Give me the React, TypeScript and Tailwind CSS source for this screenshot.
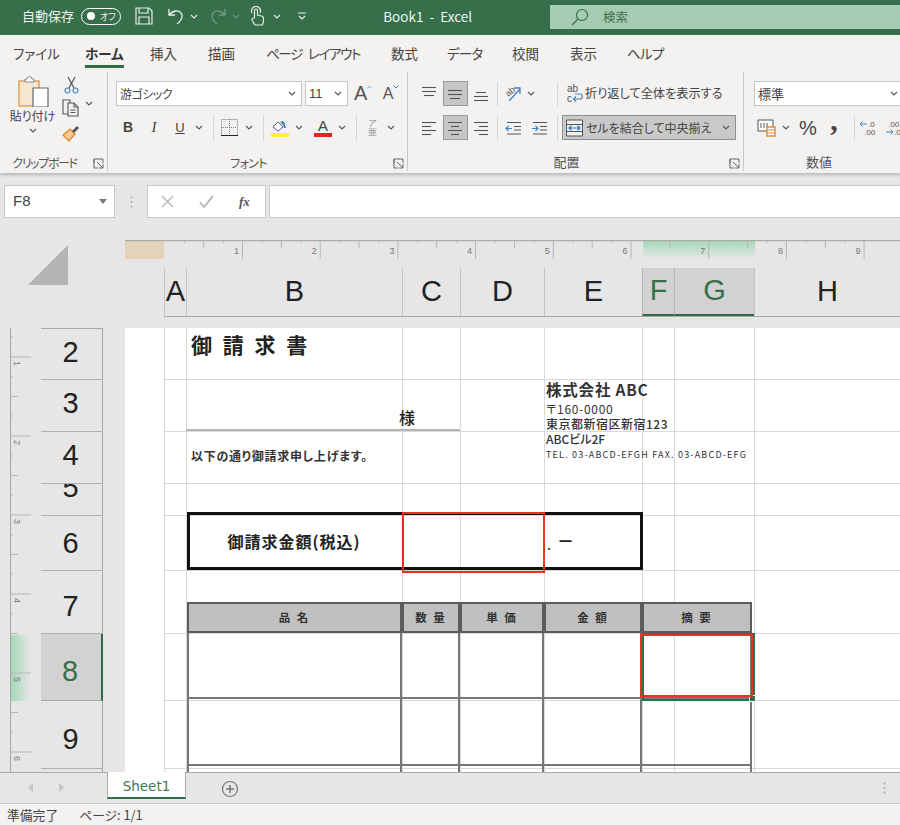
import React from "react";

const Chev = ({ c = "#555", s = 8 }: { c?: string; s?: number }) => (
  <svg className="shrink-0" width={s} height={s * 0.625} viewBox="0 0 8 5" fill="none" stroke={c} strokeWidth="1.1"><path d="M1 1l3 3 3-3" /></svg>
);
const Slot = ({ c, children }: { c: string; children?: React.ReactNode }) => (
  <div className={`flex h-full shrink-0 items-center justify-center ${c}`}>{children}</div>
);
const Sep = () => <div className="h-[24px] w-px shrink-0 bg-[#d4d4d4]" />;

const Lines = ({ rows }: { rows: [number, number, number][] }) => (
  <svg width="18" height="18" viewBox="0 0 18 18" stroke="#555" strokeWidth="1.1">
    {rows.map(([x1, x2, y], i) => <line key={i} x1={x1} x2={x2} y1={y + 0.5} y2={y + 0.5} />)}
  </svg>
);

const Launcher = () => (
  <svg width="11" height="11" viewBox="0 0 11 11" fill="none" stroke="#666" strokeWidth="1">
    <path d="M1 5V1h9v4M1 1v9h4" /><path d="M4 4l6 6M6 10h4V6" />
  </svg>
);

function Group({ w, lw, label, launcher = true, children }: { w: string; lw: string; label: string; launcher?: boolean; children: React.ReactNode }) {
  return (
    <div className={`my-[2px] flex shrink-0 flex-col ${w}`}>
      <div className="min-h-0 flex-1">{children}</div>
      <div className="flex h-[18px] items-center pt-[2px]">
        <div className={`text-center leading-none text-[#555] ${lw}`}>{label}</div>
        {launcher && <div className="flex w-[18px] justify-center"><Launcher /></div>}
      </div>
    </div>
  );
}

const TABS: [string, string][] = [
  ["ファイル", "w-[72px]"], ["ホーム", "w-[65px]"], ["挿入", "w-[58px]"], ["描画", "w-[58px]"], ["ページ レイアウト", "w-[125px] tracking-[-1.300px] [word-spacing:4px]"],
  ["数式", "w-[56px]"], ["データ", "w-[65px] tracking-[-0.8px]"], ["校閲", "w-[58px]"], ["表示", "w-[57px]"], ["ヘルプ", "w-[60px] tracking-[-0.8px]"],
];

function TitleBar() {
  const ink = "#e6efe9";
  return (
    <div className="flex h-[35px] shrink-0 items-center bg-[#366f4a] pb-[3px] pl-[22px] text-[#eef4f0]">
      <span className="w-[51px] text-[13px] whitespace-nowrap">自動保存</span>
      <div className="ml-[8px] flex h-[17px] w-[41px] items-center rounded-full border border-white pl-[5px]">
        <span className="h-[8px] w-[8px] rounded-full bg-white" />
        <span className="ml-[5px] text-[9px] leading-none">オフ</span>
      </div>
      <div className="ml-[14px] flex">
        <svg width="18" height="18" viewBox="0 0 18 18" fill="none" stroke={ink} strokeWidth="1.2"><path d="M1 1h13l3 3v13H1z" /><path d="M4 1v5h9V1M4 17v-7h10v7" /></svg>
      </div>
      <div className="ml-[15px] flex">
        <svg width="16" height="18" viewBox="0 0 16 18" fill="none" stroke={ink} strokeWidth="1.3"><path d="M1 2v6h6" /><path d="M1 8c4-5 10-5 12-2 3 4-1 9-4 11" /></svg>
      </div>
      <Slot c="w-[20px]"><Chev c={ink} /></Slot>
      <div className="ml-[6px] flex">
        <svg width="16" height="18" viewBox="0 0 16 18" fill="none" stroke="#6f9a7f" strokeWidth="1.3"><path d="M15 2v6H9" /><path d="M15 8c-4-5-10-5-12-2-3 4 1 9 4 11" /></svg>
      </div>
      <Slot c="w-[20px]"><Chev c="#6f9a7f" /></Slot>
      <div className="ml-[4px] flex">
        <svg width="14" height="20" viewBox="0 0 14 20" fill="none" stroke={ink} strokeWidth="1.2"><path d="M2 7a4.5 4.5 0 1 1 8 0" /><path d="M4.5 12V4.5a1.5 1.5 0 0 1 3 0V9l4 1c1.500.4 2 1 2 2v3l-1 4H5l-3-5c-.5-1 .5-2 2.500-2" /></svg>
      </div>
      <Slot c="w-[26px]"><Chev c={ink} /></Slot>
      <Slot c="w-[24px]">
        <svg width="10" height="9" viewBox="0 0 10 9" fill="none" stroke={ink} strokeWidth="1.1"><path d="M1 1h8M2 4l3 3 3-3" /></svg>
      </Slot>
      <span className="ml-[69px] w-[100px] text-[13.500px] whitespace-nowrap">Book1 &nbsp;-&nbsp; Excel</span>
      <div className="mt-[5px] ml-[69px] flex h-[24px] w-[350px] shrink-0 items-center self-start bg-[#a6cbb3] pl-[21px] text-[#3f6f52]">
        <svg width="18" height="18" viewBox="0 0 18 18" fill="none" stroke="#33704a" strokeWidth="1.2"><circle cx="11" cy="7" r="5.500" /><path d="M7 11l-6 6" /></svg>
        <span className="ml-[14px] text-[12.500px]">検索</span>
      </div>
    </div>
  );
}

function TabRow() {
  return (
    <div className="flex h-[35px] shrink-0 items-center bg-[#f3f2f1] pl-[13px] text-[13.500px] text-[#444]">
      {TABS.map(([t, w]) => (
        <div key={t} className={`shrink-0 whitespace-nowrap ${w}`}>
          <span className={`inline-block border-b-[3px] pt-[6px] pb-[1px] ${t === "ホーム" ? "border-[#2f6b45] font-bold text-[#333]" : "border-transparent"}`}>{t}</span>
        </div>
      ))}
    </div>
  );
}

function Ribbon() {
  return (
    <div className="relative z-10 flex h-[103px] shrink-0 overflow-hidden bg-[#f3f2f1] shadow-[0_2px_3px_rgba(0,0,0,0.2)]">
      {/* clipboard */}
      <Group w="w-[108px] border-r border-[#c8c8c8]" lw="w-[89px] text-[12px] tracking-[-1.400px] whitespace-nowrap" label="クリップボード">
        <div className="flex h-full">
          <div className="ml-[9px] flex w-[47px] shrink-0 flex-col items-center pt-[3px]">
            <svg width="32" height="32" viewBox="0 0 32 32" fill="none">
              <path d="M2 6h20v25H2z" fill="#f7e6cf" stroke="#dfa45a" strokeWidth="1.500" />
              <path d="M8 6V4h2a2.500 2.500 0 0 1 5 0h2v3H8z" fill="#fff" stroke="#888" strokeWidth="1" />
              <path d="M16 13h15v19H16z" fill="#fff" stroke="#666" strokeWidth="1.200" />
            </svg>
            <span className="mt-[1px] text-[12px] leading-[15px] whitespace-nowrap text-[#444]">貼り付け</span>
            <div className="mt-[5px]"><Chev /></div>
          </div>
          <div className="ml-[5px] flex w-[20px] flex-col items-center pt-[4px]">
            <svg width="15" height="18" viewBox="0 0 15 18" fill="none" stroke="#4a4a4a" strokeWidth="1.100"><path d="M4 1l6 11M11 1L5 12" /><circle cx="3.500" cy="14.500" r="2.500" stroke="#3d85c6" /><circle cx="11.500" cy="14.500" r="2.500" stroke="#3d85c6" /></svg>
            <svg className="mt-[5px]" width="18" height="18" viewBox="0 0 18 18" fill="none" stroke="#555" strokeWidth="1.100"><path d="M1 1h7v14H1z" /><path d="M6 4h6l4 4v9H6z" fill="#f3f2f1" /><path d="M12 4v4h4M8.500 11h5M8.500 13.500h5" /></svg>
            <svg className="mt-[7px]" width="18" height="18" viewBox="0 0 18 18"><path d="M1 11l7-6 5 5-6 7c-2-2-4-3-6-6z" fill="#f5c78e" stroke="#d98a2b" strokeWidth="1.200" /><path d="M10 7l5-5 2 2-5 5z" fill="#555" /></svg>
          </div>
          <div className="ml-[4px] pt-[29px]"><Chev /></div>
        </div>
      </Group>
      {/* font */}
      <Group w="w-[300px] border-r border-[#c8c8c8]" lw="w-[281px] text-[12px] tracking-[-0.700px]" label="フォント">
        <div className="flex h-[25px] mt-[9px] pl-[8px]">
          <div className="flex h-full w-[186px] items-center justify-between border border-[#c6c6c6] bg-white pr-[5px] pl-[3px] text-[12px] tracking-[-0.500px] text-[#444]"><span>游ゴシック</span><Chev /></div>
          <div className="ml-[3px] flex h-full w-[43px] items-center justify-between border border-[#c6c6c6] bg-white pr-[5px] pl-[3px] text-[13px] text-[#444]"><span className="font-['Liberation_Sans']">11</span><Chev /></div>
          <div className="ml-[6px] flex w-[18px] items-start justify-center text-[20px] leading-[24px] text-[#555]"><span className="font-['Liberation_Sans']">A</span><svg className="mt-[4px]" width="6" height="4" viewBox="0 0 6 4" fill="none" stroke="#3d85c6"><path d="M0.500 3.500L3 1l2.500 2.500" /></svg></div>
          <div className="ml-[10px] flex w-[18px] items-start justify-center text-[16px] leading-[25px] text-[#555]"><span className="font-['Liberation_Sans']">A</span><svg className="mt-[4px]" width="6" height="4" viewBox="0 0 6 4" fill="none" stroke="#3d85c6"><path d="M0.500 0.500L3 3l2.500-2.500" /></svg></div>
        </div>
        <div className="mt-[9px] flex h-[25px] items-center pl-[8px] font-['Liberation_Sans'] text-[#444]">
          <Slot c="w-[24px]"><span className="text-[14px] font-bold">B</span></Slot>
          <Slot c="w-[28px]"><span className="font-['Liberation_Serif'] text-[15px] italic">I</span></Slot>
          <Slot c="w-[24px]"><span className="text-[13px] underline">U</span></Slot>
          <Slot c="w-[14px]"><Chev /></Slot>
          <Slot c="w-[14px]"><Sep /></Slot>
          <Slot c="w-[18px]">
            <svg width="17" height="17" viewBox="0 0 17 17" fill="none" stroke="#777" strokeWidth="1" strokeDasharray="1 1"><path d="M.5.500h16v16H.5zM8.500 0v16M0 8.500h16" /><path d="M0 16.500h17" stroke="#222" strokeDasharray="none" /></svg>
          </Slot>
          <Slot c="w-[22px]"><Chev /></Slot>
          <Slot c="w-[6px]"><Sep /></Slot>
          <Slot c="w-[28px]">
            <svg width="18" height="18" viewBox="0 0 18 18"><path d="M2 8l5-5 5 5-5 4z" fill="#fff" stroke="#666" /><path d="M9 3c3-2 5 0 5 3l1 3-2 0-1-3z" fill="#3d85c6" /><rect x="0" y="14" width="18" height="4" fill="#ffef38" /></svg>
          </Slot>
          <Slot c="w-[10px]"><Chev /></Slot>
          <Slot c="w-[38px]">
            <div className="flex w-[18px] flex-col items-center"><span className="text-[15px] leading-[14px]">A</span><span className="h-[4px] w-[18px] bg-[#e8261c]" /></div>
          </Slot>
          <Slot c="-ml-[7px] w-[14px]"><Chev /></Slot>
          <Slot c="w-[14px]"><Sep /></Slot>
          <Slot c="w-[18px]">
            <div className="flex flex-col items-center text-[9px] leading-[9px] text-[#888]"><span>ア</span><span>亜</span></div>
          </Slot>
          <Slot c="w-[20px]"><Chev /></Slot>
        </div>
      </Group>
      {/* alignment */}
      <Group w="w-[336px] border-r border-[#c8c8c8]" lw="-mt-[3px] w-[317px] text-[13px]" label="配置">
        <div className="mt-[9px] flex h-[25px] items-center pl-[8px]">
          <Slot c="w-[26px]"><Lines rows={[[2, 16, 2], [2, 16, 6], [4, 14, 10]]} /></Slot>
          <Slot c="w-[26px]"><div className="flex h-[25px] w-[25px] items-center justify-center border border-[#9a9a9a] bg-[#c6c6c6]"><Lines rows={[[2, 16, 5], [2, 16, 9], [4, 14, 13]]} /></div></Slot>
          <Slot c="w-[26px]"><Lines rows={[[4, 14, 7], [2, 16, 11], [2, 16, 15]]} /></Slot>
          <Slot c="w-[6px]"><Sep /></Slot>
          <Slot c="w-[26px]">
            <svg width="20" height="20" viewBox="0 0 20 20" fill="none"><text x="3" y="11" fontSize="9" fill="#555" fontFamily="Liberation Sans" transform="rotate(-40 7 9)">ab</text><path d="M6 17L17 5M11 4h6v6" stroke="#3d85c6" strokeWidth="1.300" /></svg>
          </Slot>
          <Slot c="w-[10px]"><Chev /></Slot>
          <Slot c="w-[21px]" />
          <Slot c="w-px"><Sep /></Slot>
          <div className="ml-[9px] flex items-center text-[12.200px] whitespace-nowrap text-[#444]">
            <svg width="17" height="20" viewBox="0 0 17 20" fill="none"><text x="0" y="8" fontSize="10" fill="#555" fontFamily="Liberation Sans">ab</text><text x="0" y="18" fontSize="10" fill="#555" fontFamily="Liberation Sans">c</text><path d="M7 15h6c3 0 3-5 0-5H8M9 12.500L6.500 15 9 17.500" stroke="#3d85c6" strokeWidth="1.200" /></svg>
            <span className="ml-[1px]">折り返して全体を表示する</span>
          </div>
        </div>
        <div className="mt-[9px] flex h-[25px] items-center pl-[8px]">
          <Slot c="w-[26px]"><Lines rows={[[2, 16, 3], [2, 11, 7], [2, 16, 11], [2, 11, 15]]} /></Slot>
          <Slot c="w-[26px]"><div className="flex h-[25px] w-[25px] items-center justify-center border border-[#9a9a9a] bg-[#c6c6c6]"><Lines rows={[[2, 16, 3], [5, 13, 7], [2, 16, 11], [5, 13, 15]]} /></div></Slot>
          <Slot c="w-[26px]"><Lines rows={[[2, 16, 3], [7, 16, 7], [2, 16, 11], [7, 16, 15]]} /></Slot>
          <Slot c="w-[6px]"><Sep /></Slot>
          <Slot c="w-[27px]">
            <svg width="18" height="18" viewBox="0 0 18 18" fill="none"><path d="M2 3.500h14M9 7.500h7M9 11h7M2 15h14" stroke="#555" /><path d="M7 9.500H1M3.500 7L1 9.500 3.500 12" stroke="#3d85c6" strokeWidth="1.200" /></svg>
          </Slot>
          <Slot c="w-[26px]">
            <svg width="18" height="18" viewBox="0 0 18 18" fill="none"><path d="M2 3.500h14M9 7.500h7M9 11h7M2 15h14" stroke="#555" /><path d="M1 9.500h6M4.500 7L7 9.500 4.500 12" stroke="#3d85c6" strokeWidth="1.200" /></svg>
          </Slot>
          <Slot c="w-[4px]" />
          <Slot c="w-px"><Sep /></Slot>
          <div className="ml-[4px] flex h-[25px] w-[174px] shrink-0 items-center border border-[#8f8f8f] bg-[#c9c9c9] pl-[3px] text-[12px] whitespace-nowrap text-[#444]">
            <svg width="17" height="18" viewBox="0 0 17 18" fill="none"><path d="M.5 1h16v16H.5z" stroke="#555" fill="#f3f2f1" /><path d="M.5 5.500h16M.5 12.500h16" stroke="#555" /><path d="M3 9h11M5.500 6.800L3 9l2.500 2.200M11.500 6.800L14 9l-2.500 2.200" stroke="#2b7cd3" strokeWidth="1.200" /></svg>
            <span className="ml-[3px] w-[136px]">セルを結合して中央揃え</span>
            <Chev />
          </div>
        </div>
      </Group>
      {/* number */}
      <Group w="w-[156px]" lw="-mt-[3px] w-[150px] text-[13px]" label="数値" launcher={false}>
        <div className="mt-[9px] ml-[10px] flex h-[25px] w-[155px] shrink-0 items-center justify-between border border-[#c6c6c6] bg-white pr-[10px] pl-[3px] text-[13px] text-[#444]"><span>標準</span><Chev /></div>
        <div className="mt-[9px] flex h-[25px] items-center text-[#444]">
          <Slot c="ml-[13px] w-[19px]">
            <svg width="19" height="19" viewBox="0 0 19 19" fill="none"><path d="M1 2h15v11H1z" stroke="#555" fill="#fff" /><path d="M4 5v5M7 5v5M10 5v5" stroke="#555" /><path d="M10 9h8v9h-8z" fill="#fff" stroke="#e08a2a" strokeWidth="1.300" /><path d="M10 12h8M10 15h8" stroke="#e08a2a" /></svg>
          </Slot>
          <Slot c="w-[20px]"><Chev /></Slot>
          <Slot c="w-[24px]"><span className="font-['Liberation_Sans'] text-[20px]">%</span></Slot>
          <Slot c="w-[28px]"><span className="-mt-[16px] font-['Liberation_Serif'] text-[30px] font-bold leading-none">,</span></Slot>
          <Slot c="w-[6px]" />
          <Slot c="w-px"><Sep /></Slot>
          <Slot c="w-[26px]">
            <svg width="18" height="18" viewBox="0 0 18 18" fill="none"><text x="9" y="8" fontSize="8" fill="#555" fontFamily="Liberation Sans">.0</text><text x="5" y="16" fontSize="8" fill="#555" fontFamily="Liberation Sans">.00</text><path d="M8 5H1M3.500 2.500L1 5l2.500 2.500" stroke="#3d85c6" /></svg>
          </Slot>
          <Slot c="w-[26px]">
            <svg width="18" height="18" viewBox="0 0 18 18" fill="none"><text x="3" y="8" fontSize="8" fill="#555" fontFamily="Liberation Sans">.00</text><text x="9" y="16" fontSize="8" fill="#555" fontFamily="Liberation Sans">.0</text><path d="M1 13h7M5.500 10.500L8 13l-2.500 2.500" stroke="#3d85c6" /></svg>
          </Slot>
        </div>
      </Group>
    </div>
  );
}

function FormulaRow() {
  return (
    <div className="flex h-[67px] shrink-0 bg-[#e6e6e6] pt-[12px]">
      <div className="ml-[4px] flex h-[33px] w-[111px] shrink-0 items-center justify-between border border-[#c8c8c8] bg-white pr-[7px] pl-[8px] text-[15px] text-[#444]">
        <span className="font-['Liberation_Sans']">F8</span>
        <svg width="8" height="5" viewBox="0 0 8 5"><path d="M0 0h8L4 5z" fill="#777" /></svg>
      </div>
      <div className="flex h-[33px] w-[32px] items-center justify-center">
        <svg width="3" height="12" viewBox="0 0 3 12" fill="#aaa"><circle cx="1.500" cy="1.500" r="1" /><circle cx="1.500" cy="6" r="1" /><circle cx="1.500" cy="10.500" r="1" /></svg>
      </div>
      <div className="flex h-[33px] w-[119px] shrink-0 items-center border border-[#c8c8c8] bg-white">
        <svg className="ml-[13px]" width="13" height="13" viewBox="0 0 13 13" stroke="#bbb" strokeWidth="1.500"><path d="M1 1l11 11M12 1L1 12" /></svg>
        <svg className="ml-[25px]" width="15" height="13" viewBox="0 0 15 13" fill="none" stroke="#bbb" strokeWidth="2"><path d="M1 7l4 5 9-11" /></svg>
        <span className="ml-[25px] font-['Liberation_Serif'] text-[13px] italic font-bold text-[#555]">fx</span>
      </div>
      <div className="ml-[3px] h-[33px] min-w-0 flex-1 border border-r-0 border-[#c8c8c8] bg-white" />
    </div>
  );
}

const INCH_X = [1, 2, 3, 4, 5, 6, 7, 8, 9];
function HRuler() {
  const x = (i: number) => 39.8 + 77.7 * i;
  return (
    <svg className="block" width="775" height="20" viewBox="0 0 775 20">
      <defs>
        <linearGradient id="hg" x1="0" x2="0" y1="0" y2="1"><stop offset="0" stopColor="#a5d8b8" /><stop offset="1" stopColor="#a5d8b8" stopOpacity="0" /></linearGradient>
      </defs>
      <rect x="0" y="1" width="39" height="18" fill="#e2d3b9" />
      <rect x="518" y="1" width="112" height="18" fill="url(#hg)" />
      <line x1="0" x2="775" y1="0.5" y2="0.5" stroke="#ababab" strokeWidth="1.500" />
      {INCH_X.map((i) => (
        <g key={i}>
          <line x1={x(i)} x2={x(i)} y1="1" y2="19" stroke="#b5b5b5" />
          <line x1={x(i) - 38.8} x2={x(i) - 38.8} y1="1" y2="8" stroke="#b5b5b5" />
          <line x1={x(i) - 58} x2={x(i) - 58} y1="1" y2="3" stroke="#bbb" />
          <line x1={x(i) - 19} x2={x(i) - 19} y1="1" y2="3" stroke="#bbb" />
          <text x={x(i) - 6} y="14" fontSize="9" fill="#777" fontFamily="Liberation Sans" textAnchor="middle">{i}</text>
        </g>
      ))}
    </svg>
  );
}

const COLS: [string, string][] = [
  ["A", "w-[22px]"], ["B", "w-[216px]"], ["C", "w-[58px]"], ["D", "w-[84px]"], ["E", "w-[98px]"], ["F", "w-[32px]"], ["G", "w-[80px]"], ["H", "w-[146px]"],
];

function ColHeaders() {
  return (
    <div className="mt-[8px] ml-[39px] flex h-[49px] border-b border-[#a8a8a8] font-['Liberation_Sans']">
      {COLS.map(([n, w]) => {
        const sel = n === "F" || n === "G";
        return (
          <div key={n} className={`flex h-full shrink-0 items-center justify-center border-l text-[29px] ${w} ${sel ? "border-[#b5b5b5] border-b-2 border-b-[#2f6b45] bg-[#d2d2d2] text-[#35704b]" : "border-[#c4c4c4] text-[#222]"}`}>{n}</div>
        );
      })}
    </div>
  );
}

const ROWS: [string, string, string][] = [
  ["2", "h-[51px]", "pb-[4px]"], ["3", "h-[52px]", "pb-[4px]"], ["4", "h-[52px]", "pb-[4px]"], ["5", "h-[32px]", "pb-[24px]"],
  ["6", "h-[55px]", ""], ["7", "h-[63px]", "pt-[8px]"], ["8", "h-[67px]", "pt-[8px]"], ["9", "h-[68px]", "pt-[10px]"],
];

function RowHeaders() {
  return (
    <div className="w-[62px] shrink-0 border-t border-r border-[#a8a8a8] font-['Liberation_Sans']">
      {ROWS.map(([n, h, pad]) => (
        <div key={n} className={`overflow-hidden border-b pr-[2px] ${h} ${n === "8" ? "-mr-px border-r-2 border-b-[#a8a8a8] border-r-[#2f6b45] bg-[#d2d2d2] text-[#35704b]" : "border-[#b0b0b0] text-[#222]"}`}>
          <div className={`flex h-full items-center justify-center text-[29px] leading-none ${pad}`}>
            <span className="shrink-0">{n}</span>
          </div>
        </div>
      ))}
    </div>
  );
}

function VRuler() {
  const ys = [29, 108, 187, 266, 345, 424];
  return (
    <svg className="shrink-0" width="21" height="444" viewBox="0 0 21 444">
      <defs>
        <linearGradient id="vg" x1="0" x2="1" y1="0" y2="0"><stop offset="0" stopColor="#a5d8b8" /><stop offset="1" stopColor="#a5d8b8" stopOpacity="0" /></linearGradient>
      </defs>
      <rect x="1" y="307" width="20" height="66" fill="url(#vg)" />
      <line x1="0.5" x2="0.5" y1="0" y2="444" stroke="#ababab" strokeWidth="1.200" />
      {ys.map((y, i) => (
        <g key={y}>
          <line x1="1" x2="21" y1={y} y2={y} stroke="#b5b5b5" />
          <line x1="1" x2="8" y1={y + 39.500} y2={y + 39.500} stroke="#b5b5b5" />
          <line x1="1" x2="3" y1={y + 20} y2={y + 20} stroke="#bbb" />
          <line x1="1" x2="3" y1={y - 20} y2={y - 20} stroke="#bbb" />
          <text x="0" y="0" fontSize="9" fill="#777" fontFamily="Liberation Sans" transform={`translate(4 ${y + 4}) rotate(90)`}>{i + 1}</text>
        </g>
      ))}
    </svg>
  );
}

const LAYER = "grid grid-cols-[22px_216px_58px_84px_98px_32px_80px_146px] grid-rows-[51px_52px_52px_32px_55px_63px_67px_68px_4px] [grid-area:1/1]";
const TH = "flex h-[31px] items-center justify-center self-end border-2 border-[#5c5c5c] bg-[#c0c0c0] text-[11.500px] font-bold tracking-[2px] text-[#333]";
const TD = "border-2 border-t-0 border-[#777]";
const TE = "-mt-[2px] h-[6px] border-x-2 border-[#777]";

function Sheet() {
  const cells: string[] = [];
  for (let r = 0; r < 9; r++) for (let c = 0; c < 8; c++) cells.push(`${r}-${c}`);
  return (
    <div className="grid h-[444px] w-[736px] shrink-0 overflow-hidden bg-white text-[#222]">
      <div className={`${LAYER} [&>*:nth-child(-n+8)]:border-t-0`}>
        {cells.map((k) => <div key={k} className="border-t border-l border-[#d9d9d9]" />)}
      </div>
      <div className={LAYER}>
        <div className="col-start-2 row-start-1 pl-[5px] text-[21px] leading-[33px] font-bold tracking-[3px] whitespace-nowrap">御 請 求 書</div>
        <div className="col-start-2 col-span-2 row-start-2 self-end h-[2px] bg-[#b5b5b5]" />
        <div className="col-start-3 row-start-2 -ml-[3px] pt-[26px] text-[16px] leading-[24px] font-medium">様</div>
        <div className="col-start-2 row-start-3 pt-[15px] pl-[5px] text-[12px] leading-[20px] font-bold tracking-[0.700px] whitespace-nowrap text-[#333]">以下の通り御請求申し上げます。</div>
        <div className="col-start-5 col-span-3 row-start-2 row-span-2 w-[202px] overflow-hidden pt-[1px] pl-[2px] whitespace-nowrap text-[#333]">
          <div className="h-[19px] text-[15.500px] leading-[19px] font-bold tracking-[0.800px]">株式会社 ABC</div>
          <div className="h-[17px] pt-[2px] text-[12px] leading-[15px] tracking-[0.700px]">〒160-0000</div>
          <div className="h-[15px] text-[12px] leading-[15px] font-medium tracking-[0.500px]">東京都新宿区新宿123</div>
          <div className="h-[16px] text-[12px] leading-[16px] font-medium">ABCビル2F</div>
          <div className="h-[16px] text-[9px] leading-[16px] tracking-[1.200px]">TEL. 03-ABCD-EFGH FAX. 03-ABCD-EFGI</div>
        </div>

        <div className="col-start-2 col-span-4 row-start-5 -mt-[3px] -mr-[1px] ml-[1px] flex h-[58px] border-[3px] border-[#111]">
          <div className="flex w-[208px] items-center justify-center text-[16px] font-bold tracking-[1px]">御請求金額(税込)</div>
          <div className="ml-[149px] flex items-center gap-[7px] text-[15px]"><span className="mt-[5px] leading-none">.</span><span className="font-medium">ー</span></div>
        </div>
        <div className="col-start-3 col-span-2 row-start-5 -mt-[3px] h-[61px] w-[143px] border-2 border-[#e53323]" />

        <div className={`col-start-2 row-start-6 ml-[1px] ${TH}`}>品 名</div>
        <div className={`col-start-3 row-start-6 ${TH}`}>数 量</div>
        <div className={`col-start-4 row-start-6 ${TH}`}>単 価</div>
        <div className={`col-start-5 row-start-6 ${TH}`}>金 額</div>
        <div className={`col-start-6 col-span-2 row-start-6 mr-[2px] ${TH}`}>摘 要</div>

        <div className={`col-start-2 row-start-7 mb-[1px] ml-[1px] ${TD}`} />
        <div className={`col-start-3 row-start-7 mb-[1px] border-l-0 ${TD}`} />
        <div className={`col-start-4 row-start-7 mb-[1px] border-l-0 ${TD}`} />
        <div className={`col-start-5 row-start-7 mb-[1px] border-l-0 ${TD}`} />
        <div className={`col-start-6 col-span-2 row-start-7 mr-[2px] mb-[1px] border-l-0 ${TD}`} />

        <div className={`col-start-2 row-start-8 -mt-[1px] mb-[2px] ml-[1px] ${TD}`} />
        <div className={`col-start-3 row-start-8 -mt-[1px] mb-[2px] border-l-0 ${TD}`} />
        <div className={`col-start-4 row-start-8 -mt-[1px] mb-[2px] border-l-0 ${TD}`} />
        <div className={`col-start-5 row-start-8 -mt-[1px] mb-[2px] border-l-0 ${TD}`} />
        <div className={`col-start-6 col-span-2 row-start-8 -mt-[1px] mr-[2px] mb-[2px] border-l-0 ${TD}`} />

        <div className={`col-start-2 row-start-9 ml-[1px] ${TE}`} />
        <div className={`col-start-3 row-start-9 border-l-0 ${TE}`} />
        <div className={`col-start-4 row-start-9 border-l-0 ${TE}`} />
        <div className={`col-start-5 row-start-9 border-l-0 ${TE}`} />
        <div className={`col-start-6 col-span-2 row-start-9 mr-[2px] border-l-0 ${TE}`} />

        <div className="relative col-start-6 col-span-2 row-start-7 -mr-px h-[68px] border-2 border-[#2f7049]">
          <span className="absolute -right-[3px] -bottom-[3px] h-[7px] w-[7px] border border-white bg-[#2f7049]" />
        </div>
        <div className="col-start-6 col-span-2 row-start-7 relative z-10 mt-[1px] -ml-[2px] h-[63px] w-[113px] border-2 border-[#e53323]" />
      </div>
    </div>
  );
}

function TabBar() {
  return (
    <div className="relative z-10 flex h-[31px] shrink-0 items-start border-t border-[#ababab] bg-[#e6e6e6]">
      <svg className="mt-[10px] ml-[28px]" width="5" height="9" viewBox="0 0 5 9"><path d="M5 0v9L0 4.500z" fill="#c4c4c4" /></svg>
      <svg className="mt-[10px] ml-[26px]" width="5" height="9" viewBox="0 0 5 9"><path d="M0 0v9l5-4.500z" fill="#c4c4c4" /></svg>
      <div className="-mt-px ml-[43px] flex h-[27px] w-[79px] items-center justify-center border-x border-b-2 border-x-[#ababab] border-b-[#2f7049] bg-white pt-[3px] font-['DejaVu_Sans'] text-[13.500px] text-[#3f7a58]">Sheet1</div>
      <svg className="mt-[7px] ml-[35px]" width="18" height="18" viewBox="0 0 18 18" fill="none" stroke="#777"><circle cx="9" cy="9" r="7.500" strokeWidth="1.200" /><path d="M9 5v8M5 9h8" strokeWidth="1.500" /></svg>
      <svg className="mt-[9px] mr-[14px] ml-auto" width="3" height="12" viewBox="0 0 3 12" fill="#aaa"><circle cx="1.500" cy="1.500" r="1" /><circle cx="1.500" cy="6" r="1" /><circle cx="1.500" cy="10.500" r="1" /></svg>
    </div>
  );
}

export default function App() {
  return (
    <div className="flex h-[825px] w-[900px] flex-col overflow-hidden bg-[#e6e6e6] font-['Noto_Sans_CJK_JP','Liberation_Sans',sans-serif] [font-feature-settings:'palt']">
      <TitleBar />
      <TabRow />
      <Ribbon />
      <FormulaRow />
      <div className="flex h-[77px] shrink-0">
        <div className="w-[125px] shrink-0 pt-[5px] pl-[28px]">
          <svg width="40" height="40" viewBox="0 0 40 40"><path d="M40 0v40H0z" fill="#b4b4b4" /></svg>
        </div>
        <div className="min-w-0 flex-1">
          <HRuler />
          <ColHeaders />
        </div>
      </div>
      <div className="mt-[11px] flex h-[444px] shrink-0">
        <div className="w-[10px] shrink-0" />
        <VRuler />
        <div className="w-[10px] shrink-0" />
        <RowHeaders />
        <div className="w-[22px] shrink-0" />
        <div className="w-[39px] shrink-0 bg-white" />
        <Sheet />
      </div>
      <TabBar />
      <div className="flex h-[22px] shrink-0 items-center border-t border-[#c8c8c8] bg-[#f3f2f1] pt-[1px] pl-[7px] text-[12.800px] text-[#444]">
        <span>準備完了</span>
        <span className="ml-[21px]">ページ: 1/1</span>
      </div>
    </div>
  );
}
